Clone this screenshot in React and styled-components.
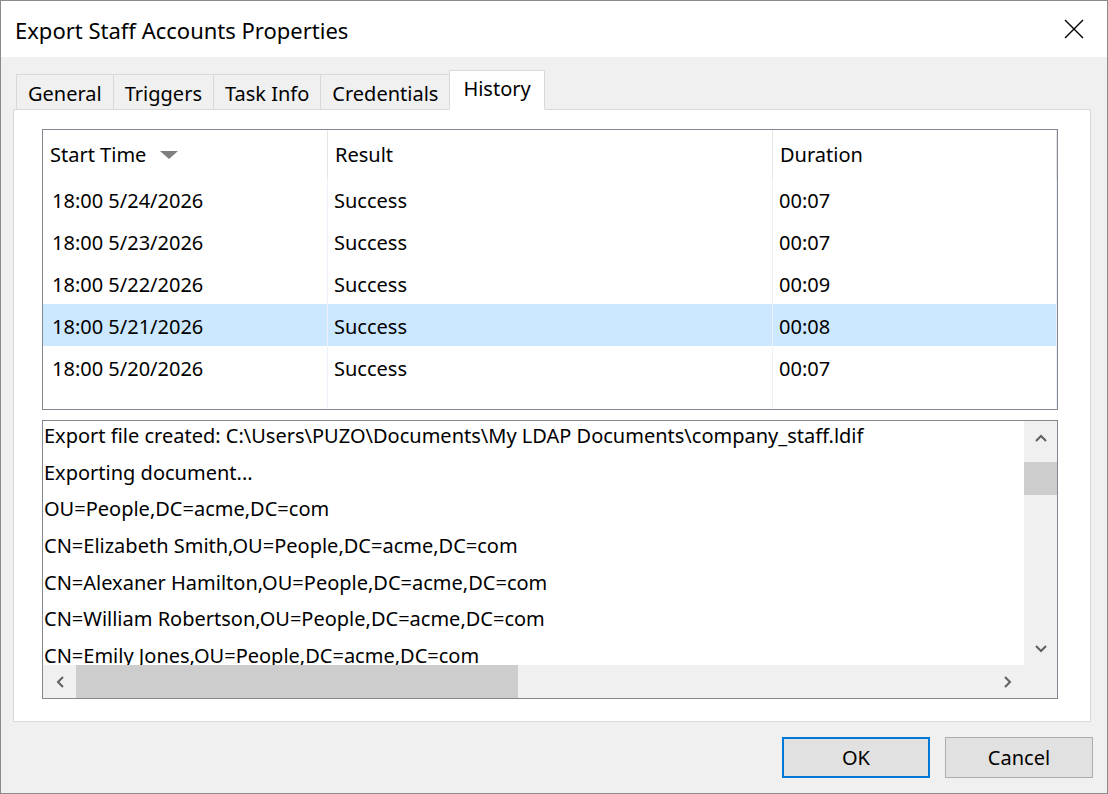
import React from 'react'
import styled, {createGlobalStyle} from 'styled-components'

const GlobalStyle = createGlobalStyle`
    html, body {
        margin: 0;
        padding: 0;
        background: #ffffff;
    }
    body {
        font-family: "Noto Sans", "Open Sans", sans-serif;
        color: #000000;
    }
`;

const historyRows = [
    {start: "18:00 5/24/2026", result: "Success", duration: "00:07"},
    {start: "18:00 5/23/2026", result: "Success", duration: "00:07"},
    {start: "18:00 5/22/2026", result: "Success", duration: "00:09"},
    {start: "18:00 5/21/2026", result: "Success", duration: "00:08", selected: true},
    {start: "18:00 5/20/2026", result: "Success", duration: "00:07"},
];

const logLines = [
    "Export file created: C:\\Users\\PUZO\\Documents\\My LDAP Documents\\company_staff.ldif",
    "Exporting document...",
    "OU=People,DC=acme,DC=com",
    "CN=Elizabeth Smith,OU=People,DC=acme,DC=com",
    "CN=Alexaner Hamilton,OU=People,DC=acme,DC=com",
    "CN=William Robertson,OU=People,DC=acme,DC=com",
    "CN=Emily Jones,OU=People,DC=acme,DC=com",
];

const tabs = ["General", "Triggers", "Task Info", "Credentials", "History"];

export default function App() {
    return (
        <>
            <GlobalStyle/>
            <Window>
                <TitleBar>
                    <Title>Export Staff Accounts Properties</Title>
                    <CloseButton aria-label="Close">
                        <svg width="20" height="20" viewBox="0 0 20 20">
                            <path d="M1 1 L19 19 M19 1 L1 19" stroke="#000" strokeWidth="1.4" fill="none"/>
                        </svg>
                    </CloseButton>
                </TitleBar>
                <Body>
                    <TabStrip>
                        {tabs.map(t => (
                            <Tab key={t} active={t === "History"}>{t}</Tab>
                        ))}
                    </TabStrip>
                    <Panel>
                        <ListView>
                            <HeaderRow>
                                <HeaderCell>
                                    Start Time
                                    <SortArrow viewBox="0 0 18 8" width="18" height="8">
                                        <path d="M0 0 L18 0 L9 8 Z" fill="#7f7f7f"/>
                                    </SortArrow>
                                </HeaderCell>
                                <HeaderCell>Result</HeaderCell>
                                <HeaderCell>Duration</HeaderCell>
                                <HeaderCell/>
                            </HeaderRow>
                            <Rows>
                                {historyRows.map(r => (
                                    <Row key={r.start} selected={r.selected}>
                                        <Cell first>{r.start}</Cell>
                                        <Cell>{r.result}</Cell>
                                        <Cell>{r.duration}</Cell>
                                        <Cell/>
                                    </Row>
                                ))}
                                <Row filler>
                                    <Cell/><Cell/><Cell/><Cell/>
                                </Row>
                            </Rows>
                        </ListView>
                        <LogBox>
                            <LogText>
                                {logLines.map(l => <LogLine key={l}>{l}</LogLine>)}
                            </LogText>
                            <VScroll>
                                <ScrollArrow>
                                    <svg width="12" height="8" viewBox="0 0 12 8">
                                        <path d="M1 7 L6 2 L11 7" stroke="#606060" strokeWidth="2" fill="none"/>
                                    </svg>
                                </ScrollArrow>
                                <VTrack>
                                    <VThumb/>
                                </VTrack>
                                <ScrollArrow>
                                    <svg width="12" height="8" viewBox="0 0 12 8">
                                        <path d="M1 1 L6 6 L11 1" stroke="#606060" strokeWidth="2" fill="none"/>
                                    </svg>
                                </ScrollArrow>
                            </VScroll>
                            <HScroll>
                                <ScrollArrow>
                                    <svg width="8" height="12" viewBox="0 0 8 12">
                                        <path d="M7 1 L2 6 L7 11" stroke="#606060" strokeWidth="2" fill="none"/>
                                    </svg>
                                </ScrollArrow>
                                <HTrack>
                                    <HThumb/>
                                </HTrack>
                                <ScrollArrow>
                                    <svg width="8" height="12" viewBox="0 0 8 12">
                                        <path d="M1 1 L6 6 L1 11" stroke="#606060" strokeWidth="2" fill="none"/>
                                    </svg>
                                </ScrollArrow>
                            </HScroll>
                            <Corner/>
                        </LogBox>
                    </Panel>
                    <ButtonRow>
                        <DialogButton primary>OK</DialogButton>
                        <DialogButton>Cancel</DialogButton>
                    </ButtonRow>
                </Body>
            </Window>
        </>
    );
}

const Window = styled.div`
    width: 1108px;
    height: 794px;
    box-sizing: border-box;
    border: 1px solid #8a8a8a;
    display: flex;
    flex-direction: column;
    background: #f0f0f0;
    font-size: 20px;
`;

const TitleBar = styled.div`
    height: 56px;
    background: #ffffff;
    display: flex;
    align-items: center;
    justify-content: space-between;
    padding: 0 14px 0 14px;
    flex-shrink: 0;
`;

const Title = styled.div`
    font-size: 22px;
    padding-top: 2px;
`;

const CloseButton = styled.div`
    width: 46px;
    height: 40px;
    display: flex;
    align-items: center;
    justify-content: center;
    margin-right: -4px;
`;

const Body = styled.div`
    flex: 1;
    display: flex;
    flex-direction: column;
    padding: 13px 16px 15px 12px;
`;

const TabStrip = styled.div`
    display: flex;
    align-items: flex-end;
    height: 40px;
    padding-left: 3px;
    position: relative;
    z-index: 1;
    margin-bottom: -1px;
`;

const Tab = styled.div`
    box-sizing: border-box;
    height: ${p => p.active ? "40px" : "36px"};
    padding: ${p => p.active ? "4px 13px 0" : "2px 11px 0"};
    margin-left: ${p => p.active ? "-1px" : "0"};
    display: flex;
    align-items: ${p => p.active ? "flex-start" : "center"};
    border: 1px solid #d9d9d9;
    border-bottom: ${p => p.active ? "1px solid #ffffff" : "1px solid #d9d9d9"};
    border-left: ${p => p.active ? "1px solid #d9d9d9" : "none"};
    background: ${p => p.active ? "#ffffff" : "#f0f0f0"};
    &:first-child {
        border-left: 1px solid #d9d9d9;
    }
`;

const Panel = styled.div`
    height: 613px;
    box-sizing: border-box;
    background: #ffffff;
    border: 1px solid #d9d9d9;
    padding: 19px 32px 22px 28px;
    display: flex;
    flex-direction: column;
    gap: 10px;
`;

const ListView = styled.div`
    height: 281px;
    box-sizing: border-box;
    border: 1px solid #828790;
    display: flex;
    flex-direction: column;
    overflow: hidden;
`;

const columns = "285px 445px 284px 1fr";

const HeaderRow = styled.div`
    display: grid;
    grid-template-columns: ${columns};
    height: 48px;
    flex-shrink: 0;
`;

const HeaderCell = styled.div`
    display: flex;
    align-items: center;
    padding-left: 7px;
    border-right: 1px solid #e5e5e5;
    &:last-child {
        border-right: none;
    }
`;

const SortArrow = styled.svg`
    margin-left: 14px;
    margin-top: 2px;
`;

const Rows = styled.div`
    flex: 1;
    display: flex;
    flex-direction: column;
`;

const Row = styled.div`
    display: grid;
    grid-template-columns: ${columns};
    height: ${p => p.filler ? "auto" : "42px"};
    flex: ${p => p.filler ? 1 : "none"};
    background: ${p => p.selected ? "#cce8ff" : "transparent"};
`;

const Cell = styled.div`
    display: flex;
    align-items: center;
    padding-left: ${p => p.first ? "9px" : "6px"};
    padding-top: 2px;
    border-right: 1px solid #eef2f8;
    &:last-child {
        border-right: none;
    }
`;

const LogBox = styled.div`
    flex: 1;
    box-sizing: border-box;
    border: 1px solid #828790;
    display: grid;
    grid-template-columns: 1fr 33px;
    grid-template-rows: 1fr 33px;
    overflow: hidden;
`;

const LogText = styled.div`
    overflow: hidden;
    padding: 0 0 0 1px;
    white-space: nowrap;
`;

const LogLine = styled.div`
    height: 36.7px;
    line-height: 30px;
`;

const VScroll = styled.div`
    background: #f0f0f0;
    display: flex;
    flex-direction: column;
`;

const HScroll = styled.div`
    background: #f0f0f0;
    display: flex;
`;

const Corner = styled.div`
    background: #f0f0f0;
`;

const ScrollArrow = styled.div`
    width: 33px;
    height: 33px;
    flex-shrink: 0;
    display: flex;
    align-items: center;
    justify-content: center;
`;

const VTrack = styled.div`
    flex: 1;
    padding-top: 8px;
`;

const VThumb = styled.div`
    height: 33px;
    background: #cdcdcd;
`;

const HTrack = styled.div`
    flex: 1;
    display: flex;
`;

const HThumb = styled.div`
    width: 442px;
    background: #cdcdcd;
`;

const ButtonRow = styled.div`
    display: flex;
    justify-content: flex-end;
    gap: 15px;
    padding-top: 15px;
    margin-right: -2px;
`;

const DialogButton = styled.div`
    width: 148px;
    height: 41px;
    box-sizing: border-box;
    background: #e1e1e1;
    border: ${p => p.primary ? "2px solid #0078d7" : "1px solid #adadad"};
    display: flex;
    align-items: center;
    justify-content: center;
    padding-bottom: 1px;
`;
